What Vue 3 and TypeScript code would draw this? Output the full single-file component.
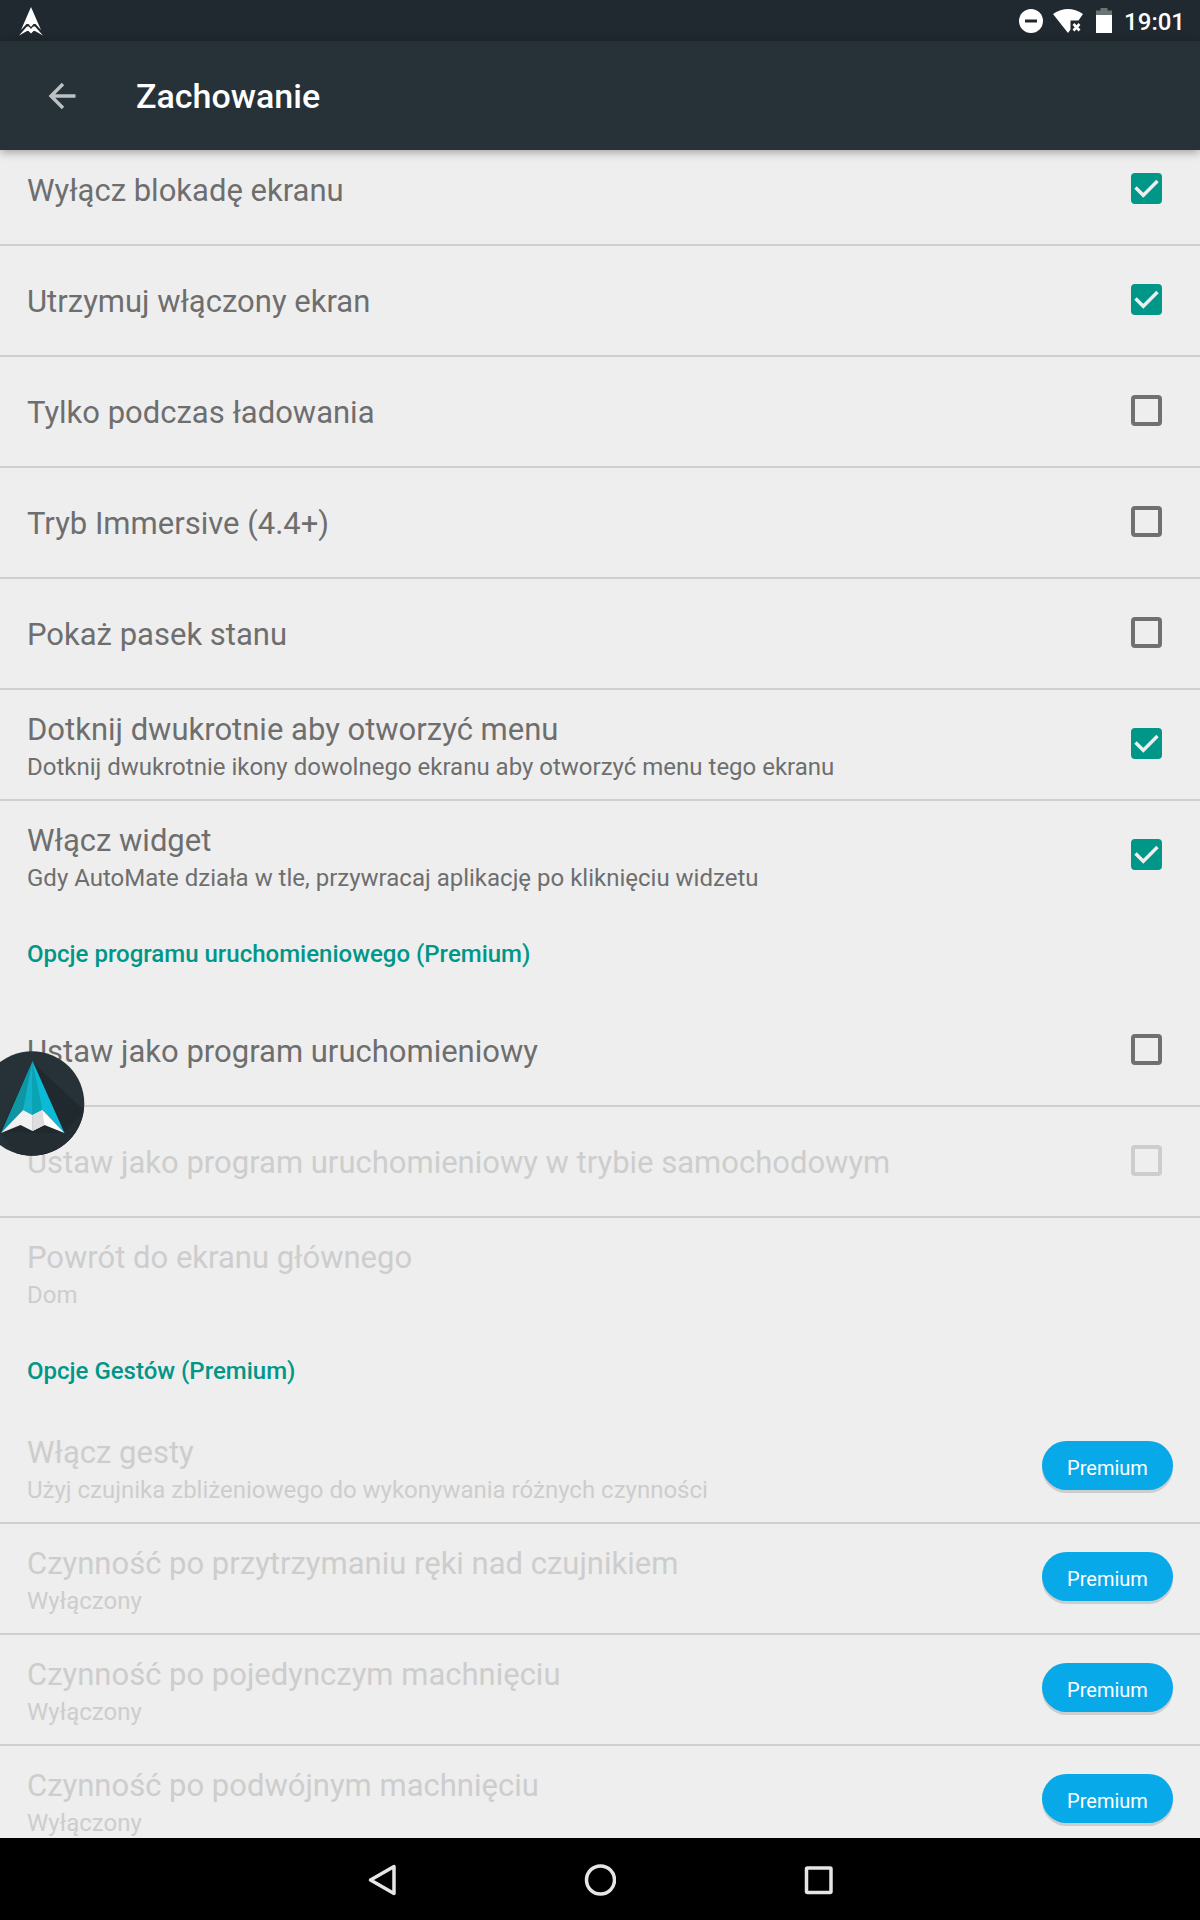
<script setup lang="ts">
import { reactive } from 'vue'

interface Option {
  id: string
  title: string
  summary?: string
  control: 'check' | 'premium' | 'none'
  checked?: boolean
  disabled?: boolean
}

interface Section {
  id: string
  heading?: string
  options: Option[]
}

const sections = reactive<Section[]>([
  {
    id: 'screen',
    options: [
      { id: 'lock', title: 'Wyłącz blokadę ekranu', control: 'check', checked: true },
      { id: 'awake', title: 'Utrzymuj włączony ekran', control: 'check', checked: true },
      { id: 'charging', title: 'Tylko podczas ładowania', control: 'check', checked: false },
      { id: 'immersive', title: 'Tryb Immersive (4.4+)', control: 'check', checked: false },
      { id: 'statusbar', title: 'Pokaż pasek stanu', control: 'check', checked: false },
      {
        id: 'doubletap',
        title: 'Dotknij dwukrotnie aby otworzyć menu',
        summary: 'Dotknij dwukrotnie ikony dowolnego ekranu aby otworzyć menu tego ekranu',
        control: 'check',
        checked: true,
      },
      {
        id: 'widget',
        title: 'Włącz widget',
        summary: 'Gdy AutoMate działa w tle, przywracaj aplikację po kliknięciu widzetu',
        control: 'check',
        checked: true,
      },
    ],
  },
  {
    id: 'launcher',
    heading: 'Opcje programu uruchomieniowego (Premium)',
    options: [
      { id: 'set-launcher', title: 'Ustaw jako program uruchomieniowy', control: 'check', checked: false },
      {
        id: 'car-launcher',
        title: 'Ustaw jako program uruchomieniowy w trybie samochodowym',
        control: 'check',
        checked: false,
        disabled: true,
      },
      { id: 'home', title: 'Powrót do ekranu głównego', summary: 'Dom', control: 'none', disabled: true },
    ],
  },
  {
    id: 'gestures',
    heading: 'Opcje Gestów (Premium)',
    options: [
      {
        id: 'gestures-on',
        title: 'Włącz gesty',
        summary: 'Użyj czujnika zbliżeniowego do wykonywania różnych czynności',
        control: 'premium',
        disabled: true,
      },
      {
        id: 'hold',
        title: 'Czynność po przytrzymaniu ręki nad czujnikiem',
        summary: 'Wyłączony',
        control: 'premium',
        disabled: true,
      },
      {
        id: 'single',
        title: 'Czynność po pojedynczym machnięciu',
        summary: 'Wyłączony',
        control: 'premium',
        disabled: true,
      },
      {
        id: 'double',
        title: 'Czynność po podwójnym machnięciu',
        summary: 'Wyłączony',
        control: 'premium',
        disabled: true,
      },
    ],
  },
])
</script>

<template>
  <div class="screen">
    <div class="status-bar">
      <svg class="status-logo" width="26" height="30" viewBox="0 0 26 30" aria-hidden="true">
        <path
          fill="#fff"
          d="M13 1 L23 24 L17.500 18 L15.500 18 L13 21 L10.500 18 L8.500 18 L3 24 Z M1 29.500 L9 20.500 L10.800 20.500 L13 23 L15.200 20.500 L17 20.500 L25 29.500 L17 25 L15.500 25 L13 27.500 L10.500 25 L9 25 Z"
        />
      </svg>
      <div class="status-icons">
        <svg width="24" height="24" viewBox="0 0 24 24" aria-hidden="true">
          <circle cx="12" cy="12" r="12" fill="#fff" />
          <rect x="6" y="10.500" width="12" height="3" fill="#20292f" />
        </svg>
        <svg class="wifi" width="30" height="24" viewBox="0 0 30 24" aria-hidden="true">
          <path fill="#fff" d="M0 5 Q15 -5 30 5 L25.500 11.500 H17.500 V20.500 L15 24 Z" />
          <path stroke="#fff" stroke-width="2.600" d="M20.500 15 L26.500 21.500 M26.500 15 L20.500 21.500" />
        </svg>
        <svg class="battery" width="16" height="25" viewBox="0 0 16 25" aria-hidden="true">
          <path fill="#6c7174" d="M4.500 0 H11.500 V2.500 H16 V8 H0 V2.500 H4.500 Z" />
          <rect y="7" width="16" height="18" fill="#fff" />
        </svg>
        <time class="clock">19:01</time>
      </div>
    </div>

    <header class="app-bar">
      <button class="back" type="button" aria-label="Wstecz">
        <svg width="28" height="28" viewBox="0 0 28 28" aria-hidden="true">
          <path d="M27.500 14 H3.500 M15 2 L3 14 L15 26" fill="none" stroke="#bec1c3" stroke-width="3.400" />
        </svg>
      </button>
      <h1>Zachowanie</h1>
    </header>

    <main class="content">
      <div class="list">
        <section v-for="section in sections" :key="section.id">
          <h2 v-if="section.heading">{{ section.heading }}</h2>
          <component
            :is="option.control === 'check' ? 'label' : 'div'"
            v-for="option in section.options"
            :key="option.id"
            class="row"
            :class="{ disabled: option.disabled }"
          >
            <span class="texts">
              <span class="title">{{ option.title }}</span>
              <span v-if="option.summary" class="summary">{{ option.summary }}</span>
            </span>
            <span v-if="option.control === 'check'" class="check">
              <input v-model="option.checked" type="checkbox" :disabled="option.disabled" />
              <svg v-if="option.checked" width="31" height="31" viewBox="0 0 31 31" aria-hidden="true">
                <path d="M4.500 14.500 L12.300 22.300 L26.500 8" fill="none" stroke="#eee" stroke-width="3.400" />
              </svg>
            </span>
            <button v-else-if="option.control === 'premium'" class="premium" type="button">Premium</button>
          </component>
        </section>
      </div>
    </main>

    <nav class="nav-bar">
      <button type="button" aria-label="Wstecz">
        <svg width="32" height="32" viewBox="0 0 32 32" aria-hidden="true">
          <path d="M28 2.500 V29.500 L4.500 16 Z" />
        </svg>
      </button>
      <button type="button" aria-label="Ekran główny">
        <svg width="32" height="32" viewBox="0 0 32 32" aria-hidden="true">
          <circle cx="16.500" cy="16" r="14" />
        </svg>
      </button>
      <button type="button" aria-label="Ostatnie aplikacje">
        <svg width="32" height="32" viewBox="0 0 32 32" aria-hidden="true">
          <rect x="4.500" y="4" width="24.500" height="24.500" rx="1" />
        </svg>
      </button>
    </nav>

    <button class="bubble" type="button" aria-label="AutoMate">
      <svg width="106" height="106" viewBox="0 0 106 106" aria-hidden="true">
        <defs>
          <clipPath id="disc"><circle cx="53" cy="52.500" r="52" /></clipPath>
        </defs>
        <circle cx="53" cy="52.500" r="52.300" fill="#263238" />
        <path d="M53 11 L106 60 L106 106 L40 106 L21 81 Z" fill="#20292e" clip-path="url(#disc)" />
        <path d="M84 82 L106 60 L106 106 L40 106 L21 81 Z" fill="#232d32" clip-path="url(#disc)" />
        <path d="M53.500 10 L22 82 L44 59 L53.500 63 Z" fill="#0d97a5" />
        <path d="M53.500 10 L44 59 L53.500 64 Z" fill="#12b3ca" />
        <path d="M53.500 10 L85.500 82 L63.500 59 L53.500 64 Z" fill="#0bbad6" />
        <path d="M53.500 10 L63.500 59 L53.500 64 Z" fill="#0aa3b4" />
        <path d="M22 82 L44 59 L53.500 64 V80 L41.500 74 Z" fill="#f1f1f1" />
        <path d="M85.500 82 L63.500 59 L53.500 64 V80 L65.500 74 Z" fill="#fff" />
        <path d="M53.500 64 L63.500 59 L65.500 74 L53.500 80 Z" fill="#dedede" />
      </svg>
    </button>
  </div>
</template>

<style>
body {
  margin: 0;
  background: #eee;
}
</style>

<style scoped>
.screen {
  position: relative;
  display: flex;
  flex-direction: column;
  height: 100vh;
  overflow: hidden;
  background: #eee;
  color: #6e6e6e;
  font-family: Roboto, "Noto Sans", sans-serif;
}

button {
  margin: 0;
  padding: 0;
  border: 0;
  background: none;
  font: inherit;
  cursor: pointer;
}

svg {
  display: block;
}

.status-bar {
  display: flex;
  flex: none;
  align-items: center;
  justify-content: space-between;
  height: 41px;
  padding: 0 15px 0 18px;
  background: #20292f;
}

.status-icons {
  display: flex;
  align-items: center;
}

.wifi {
  margin-left: 10px;
}

.battery {
  margin: 0 12px 0 13px;
}

.clock {
  padding-top: 2px;
  color: #fff;
  font-size: 24px;
  font-weight: 500;
  line-height: 28px;
}

.app-bar {
  position: relative;
  z-index: 1;
  display: flex;
  flex: none;
  align-items: center;
  height: 109px;
  background: #263238;
  box-shadow: 0 2px 9px rgba(0, 0, 0, 0.35);
}

.back {
  display: grid;
  place-items: center;
  width: 60px;
  height: 60px;
  margin: 0 44px 0 32px;
}

h1 {
  margin: 0;
  padding-top: 1px;
  color: #fff;
  font-size: 34px;
  font-weight: 500;
  line-height: 40px;
}

.content {
  flex: 1;
  min-height: 0;
  overflow: hidden;
}

/* The list is scrolled slightly under the app bar. */
.list {
  margin-top: -15px;
}

h2 {
  margin: 0;
  padding: 29px 27px 27px;
  color: #009688;
  font-size: 24px;
  font-weight: 500;
  line-height: 30px;
}

.row {
  display: flex;
  align-items: center;
  justify-content: space-between;
  min-height: 109px;
  padding: 0 27px;
  border-bottom: 2px solid #cfcfcf;
}

.row:last-child {
  border-bottom: 0;
}

.texts {
  display: flex;
  flex-direction: column;
  gap: 2px;
  padding-top: 3px;
}

.title {
  font-size: 31px;
  line-height: 40px;
}

.summary {
  font-size: 24px;
  line-height: 30px;
}

.disabled {
  color: #cdcdcd;
}

.check {
  display: grid;
  flex: none;
  margin-right: 11px;
  padding-bottom: 2px;
}

.check > * {
  grid-area: 1 / 1;
}

.check svg {
  pointer-events: none;
}

.check input {
  box-sizing: border-box;
  width: 31px;
  height: 31px;
  margin: 0;
  border: 4px solid #707070;
  border-radius: 4px;
  appearance: none;
}

.check input:checked {
  border-color: #009688;
  background: #009688;
}

.check input:disabled {
  border-color: #cdcdcd;
}

.premium {
  flex: none;
  width: 131px;
  height: 49px;
  margin-bottom: 5px;
  padding-top: 6px;
  border-radius: 25px;
  background: #08a9e9;
  box-shadow: 0 3px 0 #cdcdcd;
  color: #fff;
  font-size: 20px;
  line-height: 24px;
}

.nav-bar {
  display: flex;
  flex: none;
  justify-content: center;
  height: 82px;
  background: #000;
}

.nav-bar button {
  display: grid;
  place-items: center;
  width: 218px;
  padding-top: 2px;
}

.nav-bar svg {
  fill: none;
  stroke: #e6e6e6;
  stroke-width: 3.5px;
  stroke-linejoin: round;
}

.bubble {
  position: absolute;
  z-index: 2;
  top: 1051px;
  left: -21px;
}
</style>
